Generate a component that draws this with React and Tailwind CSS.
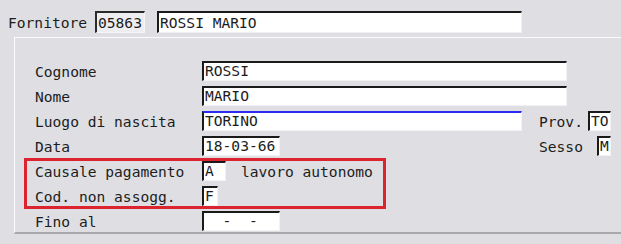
import React from "react";

const mono = "font-['DejaVu_Sans_Mono','Liberation_Mono',monospace] text-[14.6px] text-[#1c1c1c]";

function Field({ value, className = "", edge = "border-t-[#1a1a1a]" }) {
	return (
		<div
			className={`h-[20px] flex items-end pl-[1px] pb-[2px] bg-white border-t-2 border-l-2 border-l-[#1a1a1a] border-r border-b border-r-[#f2f2f4] border-b-[#f2f2f4] whitespace-pre leading-none ${edge} ${className}`}>
			{value}
		</div>
	);
}

function Row({ label, children }) {
	return (
		<div className="h-[25px] flex items-center">
			<div className="w-[167px] shrink-0 pt-[2px]">{label}</div>
			{children}
		</div>
	);
}

export default function App() {
	return (
		<div className={`w-[621px] h-[244px] bg-[#dfdfe3] overflow-hidden ${mono}`}>
			<div className="flex items-center pl-[8px] pt-[11px]">
				<span className="w-[87px] pt-[1px]">Fornitore</span>
				<div className="w-[50px] h-[22px] flex items-center pl-[1px] bg-[#eeeef1] border-t-2 border-l-2 border-[#2a2a2a] border-r border-b border-r-[#f6f6f6] border-b-[#f6f6f6]">
					05863
				</div>
				<div className="ml-[12px] w-[365px] h-[22px] flex items-center pl-[1px] bg-white border-t-2 border-l-2 border-[#1a1a1a] border-r border-b border-r-[#f0f0f2] border-b-[#f0f0f2]">
					ROSSI MARIO
				</div>
			</div>

			<div className="relative mt-[3px] ml-[14px] h-[197px] border-t border-l border-t-[#fbfbfd] border-l-[#fbfbfd] border-b-2 border-b-[#a9a9ad] pt-[21px] pl-[20px]">
				<Row label="Cognome">
					<Field value="ROSSI" className="w-[365px]" />
				</Row>
				<Row label="Nome">
					<Field value="MARIO" className="w-[365px]" />
				</Row>
				<Row label="Luogo di nascita">
					<Field value="TORINO" className="w-[320px]" edge="border-t-[#2c2cf0]" />
					<span className="ml-[17px] w-[49px] pt-[2px]">Prov.</span>
					<Field value="TO" className="w-[23px]" />
				</Row>
				<Row label="Data">
					<Field value="18-03-66" className="w-[78px] border-t-0" />
					<span className="ml-[259px] w-[58px] pt-[2px]">Sesso</span>
					<Field value="M" className="w-[14px]" />
				</Row>
				<Row label="Causale pagamento">
					<Field value="A" className="w-[24px] border-t-0" />
					<span className="ml-[15px] pt-[2px]">lavoro autonomo</span>
				</Row>
				<Row label="Cod. non assogg.">
					<Field value="F" className="w-[16px]" />
				</Row>
				<Row label="Fino al">
					<Field value="  -  -" className="w-[78px] border-t-0" />
				</Row>

				<div className="absolute left-[9px] top-[120px] w-[362px] h-[51px] border-[3px] border-[#dc2430]" />
			</div>
		</div>
	);
}
